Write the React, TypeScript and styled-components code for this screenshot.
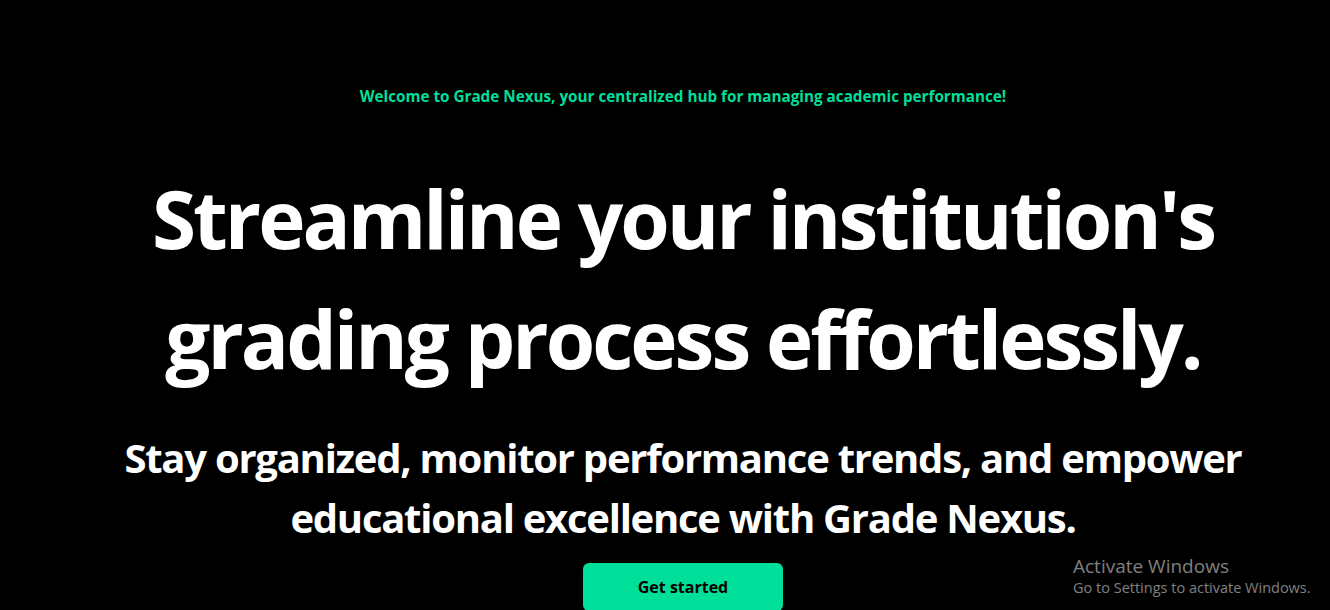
import styled, { createGlobalStyle } from 'styled-components';

const GlobalStyle = createGlobalStyle`
  * {
    box-sizing: border-box;
  }

  html,
  body {
    margin: 0;
    padding: 0;
    background: #000;
    overflow: hidden;
  }

  body {
    font-family: 'Open Sans', 'Noto Sans', sans-serif;
    color: #fff;
  }
`;

const Page = styled.div`
  position: relative;
  width: 100%;
  height: 610px;
  background: #000;
  overflow: hidden;
`;

const Hero = styled.section`
  display: flex;
  flex-direction: column;
  align-items: center;
  text-align: center;
  padding: 84px 0 0 36px;
`;

const Tagline = styled.p`
  margin: 0;
  color: #00df9a;
  font-size: 15.25px;
  font-weight: 700;
  line-height: 24px;
`;

const Headline = styled.h1`
  margin: 50px 0 0;
  font-size: 80px;
  font-weight: 700;
  line-height: 120px;
  letter-spacing: -3px;
`;

const Subtitle = styled.h2`
  margin: 30px 0 0;
  font-size: 40px;
  font-weight: 700;
  line-height: 60px;
  letter-spacing: -1.25px;
`;

const Button = styled.button`
  margin-top: 15px;
  width: 200px;
  padding: 12px 0;
  border: none;
  border-radius: 6px;
  background: #00df9a;
  color: #000;
  font-family: inherit;
  font-size: 16px;
  font-weight: 700;
  line-height: 24px;
  cursor: pointer;
`;

const Watermark = styled.div`
  position: absolute;
  left: 1073px;
  top: 554px;
  color: rgba(255, 255, 255, 0.5);
  font-family: 'Open Sans', 'Noto Sans', sans-serif;
  pointer-events: none;
`;

const WatermarkTitle = styled.div`
  font-size: 19px;
  line-height: 24px;
`;

const WatermarkText = styled.div`
  font-size: 14.5px;
  line-height: 20px;
`;

const App = () => {
  return (
    <Page>
      <GlobalStyle />
      <Hero>
        <Tagline>Welcome to Grade Nexus, your centralized hub for managing academic performance!</Tagline>
        <Headline>
          Streamline your institution's
          <br />
          grading process effortlessly.
        </Headline>
        <Subtitle>
          Stay organized, monitor performance trends, and empower
          <br />
          educational excellence with Grade Nexus.
        </Subtitle>
        <Button>Get started</Button>
      </Hero>
      <Watermark>
        <WatermarkTitle>Activate Windows</WatermarkTitle>
        <WatermarkText>Go to Settings to activate Windows.</WatermarkText>
      </Watermark>
    </Page>
  );
};

export default App;
